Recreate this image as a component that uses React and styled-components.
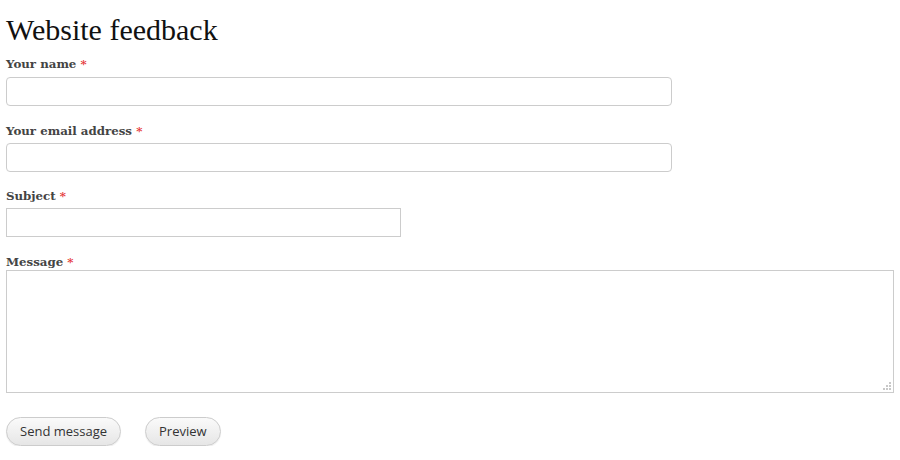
import styled, { createGlobalStyle } from "styled-components";

const Global = createGlobalStyle`
  body {
    margin: 0;
    background: #fff;
    font-family: "DejaVu Serif", Georgia, serif;
  }
`;

const Page = styled.form`
  padding: 12px 6px 0 6px;
  width: 888px;
`;

const Title = styled.h1`
  margin: 0 0 9px 0;
  font-family: "Liberation Serif", Georgia, serif;
  font-weight: normal;
  font-size: 30px;
  line-height: 35px;
  color: #111;
`;

const Field = styled.div`
  margin-bottom: 16.5px;
`;

const Label = styled.label`
  display: block;
  font-family: "DejaVu Serif", Georgia, serif;
  font-weight: bold;
  font-size: 11.8px;
  line-height: 16px;
  color: #444;
  margin-bottom: ${(p) => p.$gap ?? 4}px;

  span {
    color: #e5383b;
  }
`;

const Input = styled.input`
  display: block;
  box-sizing: border-box;
  width: ${(p) => p.$width}px;
  height: 29px;
  border: 1px solid #ccc;
  border-radius: ${(p) => (p.$rounded ? "4px" : "0")};
  background: #fff;
  margin: 0;
  outline: none;
`;

const AreaWrap = styled.div`
  position: relative;
  width: 888px;
`;

const TextArea = styled.textarea`
  display: block;
  box-sizing: border-box;
  width: 888px;
  height: 123px;
  border: 1px solid #ccc;
  margin: 0;
  resize: none;
  outline: none;
`;

const Grip = styled.svg`
  position: absolute;
  right: 3px;
  bottom: 3px;
`;

const Actions = styled.div`
  display: flex;
  gap: 24px;
  margin-top: 24px;
`;

const Button = styled.button`
  height: 29px;
  padding: 0 13px;
  border: 1px solid #ccc;
  border-radius: 15px;
  background: linear-gradient(#fafafa, #e6e6e6);
  box-shadow: 0 1px 1px rgba(0, 0, 0, 0.08);
  font-family: "Open Sans", "DejaVu Sans", sans-serif;
  font-size: 13px;
  color: #333;
`;

export default function App() {
  return (
    <>
      <Global />
      <Page onSubmit={(e) => e.preventDefault()}>
        <Title>Website feedback</Title>
        <Field>
          <Label $gap={5}>
            Your name <span>*</span>
          </Label>
          <Input $width={666} $rounded />
        </Field>
        <Field>
          <Label>
            Your email address <span>*</span>
          </Label>
          <Input $width={666} $rounded />
        </Field>
        <Field>
          <Label>
            Subject <span>*</span>
          </Label>
          <Input $width={395} />
        </Field>
        <Field>
          <Label $gap={0}>
            Message <span>*</span>
          </Label>
          <AreaWrap>
            <TextArea />
            <Grip width="8" height="8" viewBox="0 0 8 8">
              <g fill="#c8c8c8">
                <rect x="6" y="0" width="2" height="2" />
                <rect x="3" y="3" width="2" height="2" />
                <rect x="6" y="3" width="2" height="2" />
                <rect x="0" y="6" width="2" height="2" />
                <rect x="3" y="6" width="2" height="2" />
                <rect x="6" y="6" width="2" height="2" />
              </g>
            </Grip>
          </AreaWrap>
        </Field>
        <Actions>
          <Button type="button">Send message</Button>
          <Button type="button">Preview</Button>
        </Actions>
      </Page>
    </>
  );
}
